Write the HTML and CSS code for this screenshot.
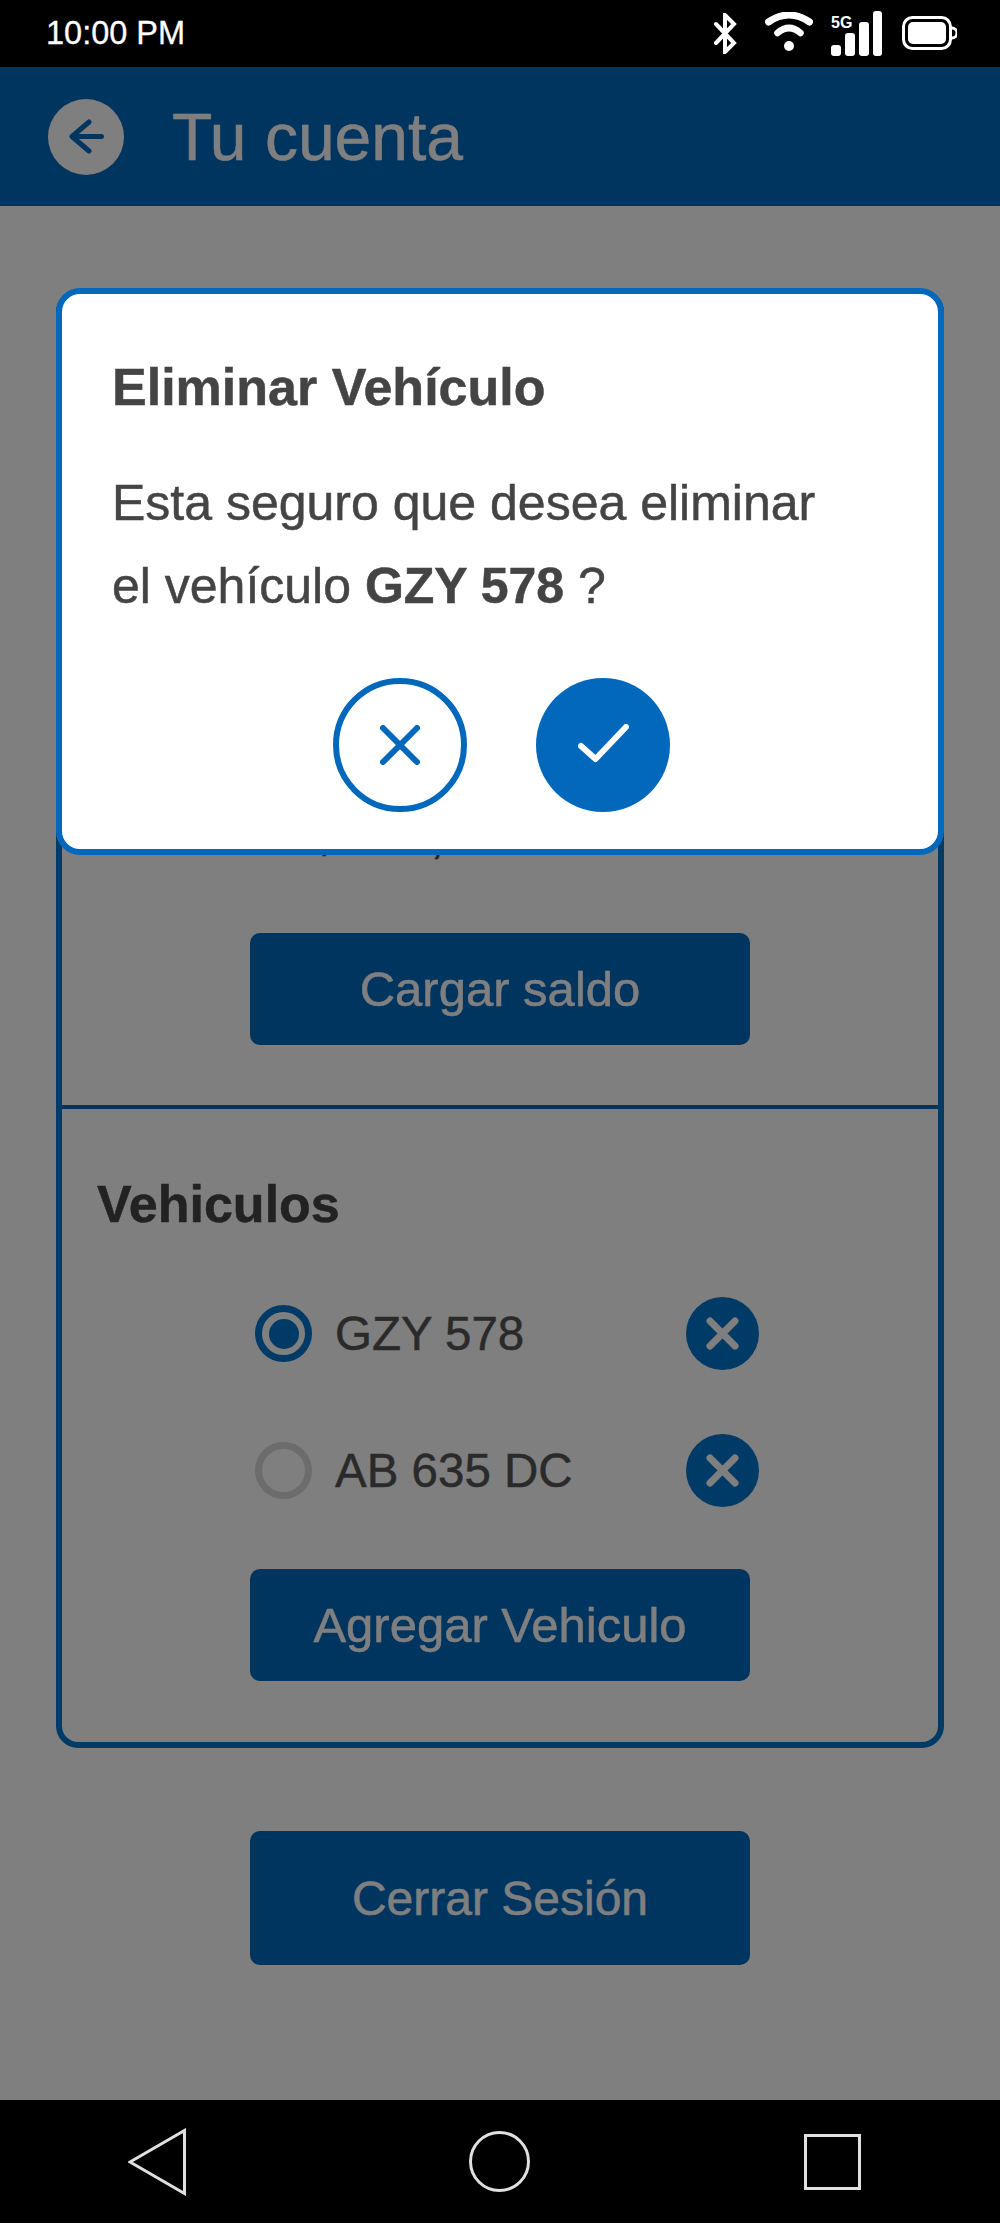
FILE: index.html
```html
<!DOCTYPE html>
<html lang="es">
<head>
<meta charset="utf-8">
<title>Tu cuenta</title>
<link rel="stylesheet" href="styles.css">
</head>
<body>
<div class="status-bar">
  <span class="time">10:00 PM</span>
  <div class="status-icons">
    <svg class="ic-bt" viewBox="0 0 25 41"><path d="M3 11 L21 30 L12 39 V2 L21 11 L3 30" fill="none" stroke="#fff" stroke-width="4" stroke-linecap="round" stroke-linejoin="miter"/></svg>
    <svg class="ic-wifi" viewBox="0 0 48 40"><path d="M3.500 10 Q24 -4 44.500 10" fill="none" stroke="#fff" stroke-width="7" stroke-linecap="round"/><path d="M12.500 21 Q24 11 35.500 21" fill="none" stroke="#fff" stroke-width="6.500" stroke-linecap="round"/><circle cx="24" cy="34" r="5" fill="#fff"/></svg>
    <svg class="ic-signal" viewBox="0 0 51 45"><text x="0" y="17" class="five-g">5G</text><rect x="0" y="34" width="10" height="11" rx="3" fill="#fff"/><rect x="14" y="22" width="10" height="23" rx="3" fill="#fff"/><rect x="28" y="11" width="10" height="34" rx="3" fill="#fff"/><rect x="42" y="0" width="9" height="45" rx="3" fill="#fff"/></svg>
    <svg class="ic-batt" viewBox="0 0 55 34"><rect x="1.5" y="1.5" width="47" height="31" rx="9" fill="none" stroke="#fff" stroke-width="3"/><rect x="6" y="6" width="38" height="22" rx="5" fill="#fff"/><path d="M50 12 a5 5 0 0 1 0 10" fill="none" stroke="#fff" stroke-width="3"/></svg>
  </div>
</div>

<div class="app">
  <header class="app-header">
    <span class="back">
      <svg viewBox="0 0 35 35"><path d="M32.500 17.500 H3 M20 3 L3 17.500 L20 32" fill="none" stroke="#006ac0" stroke-width="5" stroke-linecap="round" stroke-linejoin="round"/></svg>
    </span>
    <h1 class="app-title">Tu cuenta</h1>
  </header>

  <main class="content">
    <section class="card">
      <div class="card-section saldo">
        <p class="saldo-text">Su saldo: $ 170,00</p>
        <button class="btn btn-small">Cargar saldo</button>
      </div>
      <div class="card-section vehiculos">
        <h2 class="section-title">Vehiculos</h2>
        <ul class="vehicle-list">
          <li class="vehicle">
            <span class="radio radio-on"></span>
            <span class="plate">GZY 578</span>
            <span class="remove"><svg viewBox="0 0 33 33"><path d="M4 4 L29 29 M29 4 L4 29" stroke="#fff" stroke-width="7" stroke-linecap="round"/></svg></span>
          </li>
          <li class="vehicle">
            <span class="radio"></span>
            <span class="plate">AB 635 DC</span>
            <span class="remove"><svg viewBox="0 0 33 33"><path d="M4 4 L29 29 M29 4 L4 29" stroke="#fff" stroke-width="7" stroke-linecap="round"/></svg></span>
          </li>
        </ul>
        <button class="btn btn-small">Agregar Vehiculo</button>
      </div>
    </section>
    <button class="btn btn-large">Cerrar Sesión</button>
  </main>

  <div class="overlay">
    <div class="dialog">
      <h2 class="dialog-title">Eliminar Vehículo</h2>
      <p class="dialog-text">Esta seguro que desea eliminar<br>el vehículo <strong>GZY 578</strong> ?</p>
      <div class="dialog-actions">
        <span class="round round-outline"><svg viewBox="0 0 40 40"><path d="M3 3 L37 37 M37 3 L3 37" stroke="#0268bb" stroke-width="6" stroke-linecap="round"/></svg></span>
        <span class="round round-fill"><svg viewBox="0 0 51 42"><path d="M3 22 L17.500 35 L48 3" fill="none" stroke="#fff" stroke-width="6" stroke-linecap="round" stroke-linejoin="round"/></svg></span>
      </div>
    </div>
  </div>
</div>

<nav class="nav-bar">
  <svg class="nav-back" viewBox="0 0 58 68"><path d="M2 34 L56.500 2.500 V65.500 Z" fill="none" stroke="#e0e0e0" stroke-width="3"/></svg>
  <svg class="nav-home" viewBox="0 0 61 61"><circle cx="30.500" cy="30.500" r="29" fill="none" stroke="#e0e0e0" stroke-width="3"/></svg>
  <svg class="nav-recent" viewBox="0 0 57 56"><rect x="1.500" y="1.500" width="54" height="53" fill="none" stroke="#e0e0e0" stroke-width="3"/></svg>
</nav>
</body>
</html>
```

FILE: styles.css
```css
* { box-sizing: border-box; }

html, body { margin: 0; padding: 0; }

body {
  width: 1000px;
  height: 2223px;
  display: flex;
  flex-direction: column;
  font-family: "Liberation Sans", Arial, sans-serif;
  background: #000;
  overflow: hidden;
}

/* status bar */
.status-bar {
  height: 67px;
  background: #000;
  display: flex;
  align-items: center;
  justify-content: space-between;
  padding: 0 43px 0 46px;
  color: #fff;
  flex: none;
}
.time { font-size: 32.5px; line-height: 1; -webkit-text-stroke: 0.3px #fff; }
.status-icons { display: flex; align-items: flex-start; height: 67px; }
.status-icons svg { display: block; flex: none; }
.ic-bt { width: 25px; height: 41px; margin-top: 13px; }
.ic-wifi { width: 48px; height: 40px; margin-top: 12px; margin-left: 27px; }
.ic-signal { width: 51px; height: 45px; margin-top: 11px; margin-left: 18px; }
.ic-batt { width: 55px; height: 34px; margin-top: 16px; margin-left: 20px; }
.five-g { font-size: 16px; font-weight: 700; fill: #fff; font-family: "Liberation Sans", sans-serif; }

/* app */
.app {
  position: relative;
  flex: 1;
  display: flex;
  flex-direction: column;
  background: #fff;
}
.app-header {
  height: 139px;
  flex: none;
  background: #006ac0;
  display: flex;
  align-items: center;
  gap: 48px;
  padding-left: 48px;
}
.back {
  width: 76px;
  height: 76px;
  border-radius: 50%;
  background: #fff;
  display: flex;
  align-items: center;
  justify-content: center;
}
.back svg { width: 35px; height: 35px; display: block; }
.app-title { margin: 0; font-size: 66px; font-weight: 400; color: #fff; -webkit-text-stroke: 0.5px #fff; }

.content {
  flex: 1;
  display: flex;
  flex-direction: column;
  align-items: center;
  padding: 84px 56px 0;
}
.card {
  width: 100%;
  border: 6px solid #0074cf;
  border-radius: 22px;
}
.card-section { display: flex; flex-direction: column; }
.saldo {
  padding: 513px 35px 60px;
  border-bottom: 4px solid #006ac0;
}
.saldo-text {
  margin: 0 0 69px;
  font-size: 48px;
  color: #444;
  -webkit-text-stroke: 0.5px #444;
}
.vehiculos { padding: 65px 35px 61px; }
.section-title {
  margin: 0 0 63px;
  font-size: 52px;
  font-weight: 700;
  color: #444;
  -webkit-text-stroke: 0.5px #444;
}
.vehicle-list {
  list-style: none;
  margin: 0 0 62px;
  padding: 0 0 0 158px;
  display: flex;
  flex-direction: column;
  gap: 64px;
}
.vehicle {
  display: flex;
  align-items: center;
  width: 504px;
  height: 73px;
}
.radio {
  width: 57px;
  height: 57px;
  border-radius: 50%;
  border: 7px solid #d8d8d8;
  flex: none;
  display: flex;
  align-items: center;
  justify-content: center;
}
.radio-on { border-color: #0074cf; }
.radio-on::after {
  content: "";
  width: 30px;
  height: 30px;
  border-radius: 50%;
  background: #0074cf;
}
.plate {
  flex: 1;
  margin-left: 23px;
  font-size: 47.5px;
  color: #555;
  -webkit-text-stroke: 0.5px #555;
}
.remove {
  width: 73px;
  height: 73px;
  border-radius: 50%;
  background: #0074cf;
  flex: none;
  display: flex;
  align-items: center;
  justify-content: center;
}
.remove svg { width: 33px; height: 33px; display: block; }

.btn {
  display: block;
  width: 500px;
  border: 0;
  border-radius: 10px;
  background: #006ac0;
  color: #fff;
  font-family: inherit;
  padding: 0;
  align-self: center;
  -webkit-text-stroke: 0.5px #fff;
}
.btn-small { height: 112px; font-size: 49px; }
.btn-large { height: 134px; margin-top: 83px; font-size: 48px; }

/* modal */
.overlay {
  position: absolute;
  inset: 0;
  background: rgba(0, 0, 0, .5);
  padding: 221px 56px 0;
}
.dialog {
  height: 567px;
  background: #fff;
  border: 6px solid #0268bb;
  border-radius: 24px;
  padding: 63px 50px 0;
  color: #444;
}
.dialog-title {
  margin: 0 0 45px;
  font-size: 52px;
  font-weight: 700;
  -webkit-text-stroke: 0.5px #444;
}
.dialog-text {
  margin: 0 0 50px;
  font-size: 50px;
  line-height: 83px;
  -webkit-text-stroke: 0.5px #444;
}
.dialog-text strong { font-weight: 700; }
.dialog-actions {
  display: flex;
  justify-content: center;
  gap: 69px;
  padding-left: 3px;
  margin-left: -50px;
  margin-right: -50px;
}
.round {
  width: 134px;
  height: 134px;
  border-radius: 50%;
  display: flex;
  align-items: center;
  justify-content: center;
}
.round-outline { border: 6px solid #0268bb; background: #fff; }
.round-outline svg { width: 40px; height: 40px; display: block; }
.round-fill { background: #0268bb; }
.round-fill svg { width: 51px; height: 42px; display: block; }

/* nav bar */
.nav-bar {
  height: 123px;
  flex: none;
  background: #000;
  display: flex;
  align-items: center;
  padding-left: 128px;
}
.nav-bar svg { display: block; flex: none; }
.nav-back { width: 58px; height: 68px; }
.nav-home { width: 61px; height: 61px; margin-left: 283px; }
.nav-recent { width: 57px; height: 56px; margin-left: 274px; }
```
